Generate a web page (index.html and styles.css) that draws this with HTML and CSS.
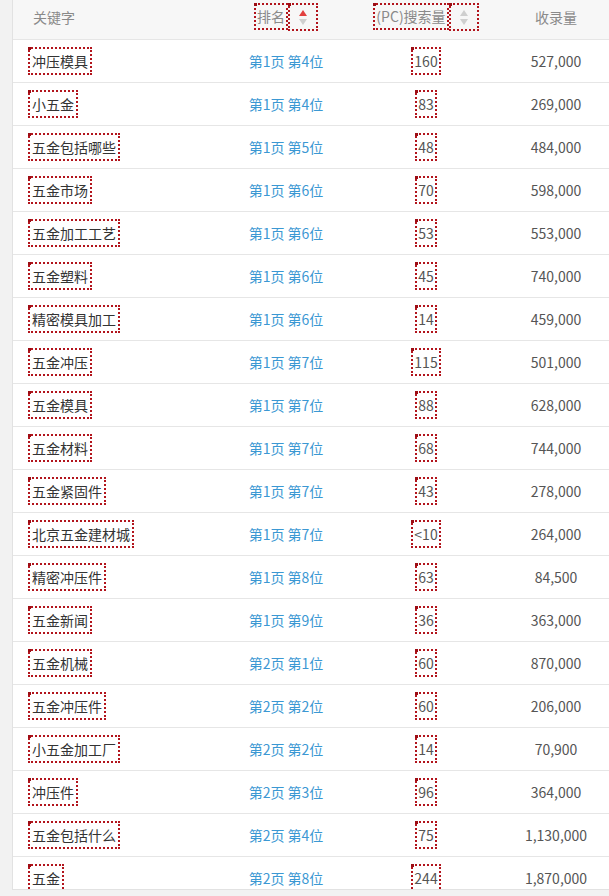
FILE: index.html
```html
<!DOCTYPE html>
<html lang="zh">
<head>
<meta charset="utf-8">
<title>关键字排名</title>
<link rel="stylesheet" href="styles.css">
</head>
<body>
<div class="panel">
  <div class="head">
    <div class="h-kw">关键字</div>
    <div class="h-sort"><span class="box">排名</span><span class="box arrows"><svg width="26" height="24" viewBox="0 0 26 24"><path d="M13 5 L17 11 L9 11 Z" fill="#e2403f"/><path d="M13 20 L17 14 L9 14 Z" fill="#cfcfcf"/></svg></span></div>
    <div class="h-sort"><span class="box">(PC)搜索量</span><span class="box arrows"><svg width="26" height="24" viewBox="0 0 26 24"><path d="M13 5 L17 11 L9 11 Z" fill="#cfcfcf"/><path d="M13 20 L17 14 L9 14 Z" fill="#cfcfcf"/></svg></span></div>
    <div class="h-val">收录量</div>
  </div>
  <div class="row"><div class="kw"><span class="box">冲压模具</span></div><div class="rank">第1页 第4位</div><div class="cnt"><span class="box">160</span></div><div class="val">527,000</div></div>
  <div class="row"><div class="kw"><span class="box">小五金</span></div><div class="rank">第1页 第4位</div><div class="cnt"><span class="box">83</span></div><div class="val">269,000</div></div>
  <div class="row"><div class="kw"><span class="box">五金包括哪些</span></div><div class="rank">第1页 第5位</div><div class="cnt"><span class="box">48</span></div><div class="val">484,000</div></div>
  <div class="row"><div class="kw"><span class="box">五金市场</span></div><div class="rank">第1页 第6位</div><div class="cnt"><span class="box">70</span></div><div class="val">598,000</div></div>
  <div class="row"><div class="kw"><span class="box">五金加工工艺</span></div><div class="rank">第1页 第6位</div><div class="cnt"><span class="box">53</span></div><div class="val">553,000</div></div>
  <div class="row"><div class="kw"><span class="box">五金塑料</span></div><div class="rank">第1页 第6位</div><div class="cnt"><span class="box">45</span></div><div class="val">740,000</div></div>
  <div class="row"><div class="kw"><span class="box">精密模具加工</span></div><div class="rank">第1页 第6位</div><div class="cnt"><span class="box">14</span></div><div class="val">459,000</div></div>
  <div class="row"><div class="kw"><span class="box">五金冲压</span></div><div class="rank">第1页 第7位</div><div class="cnt"><span class="box">115</span></div><div class="val">501,000</div></div>
  <div class="row"><div class="kw"><span class="box">五金模具</span></div><div class="rank">第1页 第7位</div><div class="cnt"><span class="box">88</span></div><div class="val">628,000</div></div>
  <div class="row"><div class="kw"><span class="box">五金材料</span></div><div class="rank">第1页 第7位</div><div class="cnt"><span class="box">68</span></div><div class="val">744,000</div></div>
  <div class="row"><div class="kw"><span class="box">五金紧固件</span></div><div class="rank">第1页 第7位</div><div class="cnt"><span class="box">43</span></div><div class="val">278,000</div></div>
  <div class="row"><div class="kw"><span class="box">北京五金建材城</span></div><div class="rank">第1页 第7位</div><div class="cnt"><span class="box">&lt;10</span></div><div class="val">264,000</div></div>
  <div class="row"><div class="kw"><span class="box">精密冲压件</span></div><div class="rank">第1页 第8位</div><div class="cnt"><span class="box">63</span></div><div class="val">84,500</div></div>
  <div class="row"><div class="kw"><span class="box">五金新闻</span></div><div class="rank">第1页 第9位</div><div class="cnt"><span class="box">36</span></div><div class="val">363,000</div></div>
  <div class="row"><div class="kw"><span class="box">五金机械</span></div><div class="rank">第2页 第1位</div><div class="cnt"><span class="box">60</span></div><div class="val">870,000</div></div>
  <div class="row"><div class="kw"><span class="box">五金冲压件</span></div><div class="rank">第2页 第2位</div><div class="cnt"><span class="box">60</span></div><div class="val">206,000</div></div>
  <div class="row"><div class="kw"><span class="box">小五金加工厂</span></div><div class="rank">第2页 第2位</div><div class="cnt"><span class="box">14</span></div><div class="val">70,900</div></div>
  <div class="row"><div class="kw"><span class="box">冲压件</span></div><div class="rank">第2页 第3位</div><div class="cnt"><span class="box">96</span></div><div class="val">364,000</div></div>
  <div class="row"><div class="kw"><span class="box">五金包括什么</span></div><div class="rank">第2页 第4位</div><div class="cnt"><span class="box">75</span></div><div class="val">1,130,000</div></div>
  <div class="row"><div class="kw"><span class="box">五金</span></div><div class="rank">第2页 第8位</div><div class="cnt"><span class="box">244</span></div><div class="val">1,870,000</div></div>
</div>
</body>
</html>
```
FILE: styles.css
```css
html, body {
  margin: 0;
  padding: 0;
  background: #f2f2f2;
  overflow: hidden;
}
body {
  font-family: "Noto Sans CJK SC", "Noto Sans", sans-serif;
  font-size: 14px;
  color: #333;
}
.panel {
  margin-left: 12px;
  border-left: 1px solid #e2e2e2;
  border-bottom: 1px solid #e2e2e2;
  background: #fff;
  height: 889px;
  overflow: hidden;
}
.head, .row {
  display: grid;
  grid-template-columns: 203px 140px 140px 1fr;
}
.head {
  height: 39px;
  background: #f7f7f7;
  border-bottom: 1px solid #e6e6e6;
  color: #8a8a8a;
  align-items: center;
}
.h-kw {
  padding-left: 20px;
  margin-top: -5px;
}
.h-sort {
  display: flex;
  justify-content: center;
  align-items: flex-start;
  align-self: start;
  margin-top: 3px;
}
.h-sort .box {
  line-height: 23px;
}
.h-sort .arrows {
  width: 26px;
  height: 24px;
  padding: 0;
  line-height: 0;
}
.arrows svg {
  display: block;
}
.h-val {
  text-align: center;
  padding-left: 7px;
  margin-top: -5px;
}
.row {
  height: 42px;
  border-bottom: 1px solid #e6e6e6;
  align-items: center;
}
.box {
  position: relative;
  display: inline-block;
  border: 2px dotted #b2141c;
  padding: 0 1px;
  line-height: 24px;
}
.box::before {
  content: "";
  position: absolute;
  left: -2px;
  top: -2px;
  width: 3px;
  height: 3px;
  background: #9c0d14;
}
.kw {
  padding-left: 15px;
  color: #333;
  margin-top: -1px;
}
.kw .box {
  padding: 0 2px;
}
.rank {
  text-align: center;
  color: #3b98d3;
  margin-top: -1px;
}
.cnt {
  text-align: center;
  color: #555;
  margin-top: -1px;
}
.val {
  text-align: center;
  padding-left: 7px;
  color: #555;
  margin-top: -1px;
}
```
